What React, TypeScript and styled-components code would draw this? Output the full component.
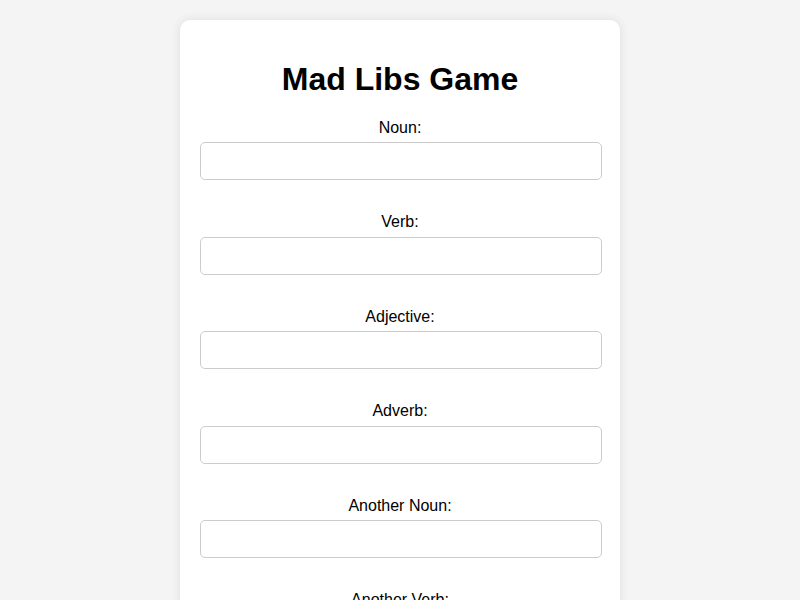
import React from "react";
import styled, { createGlobalStyle } from "styled-components";

const Global = createGlobalStyle`
  html, body { margin: 0; padding: 0; background: #f4f4f4; }
  body { font-family: "Liberation Sans", Arial, sans-serif; color: #000; }
  * { box-sizing: border-box; }
`;

const Page = styled.div`
  padding: 20px 0;
  display: flex;
  justify-content: center;
`;

const Card = styled.div`
  width: 440px;
  background: #fff;
  padding: 20px;
  border-radius: 10px;
  box-shadow: 0 0 10px rgba(0, 0, 0, 0.1);
  text-align: center;
`;

const Title = styled.h1`
  font-size: 32px;
  font-weight: bold;
  margin: 21.4px 0 20.5px;
  line-height: 37px;
`;

const Field = styled.div`
  display: flex;
  flex-direction: column;
  align-items: stretch;
  margin-bottom: 33.1px;
`;

const Label = styled.label`
  display: block;
  font-size: 16px;
  line-height: 18.4px;
  margin-bottom: 5px;
`;

const Input = styled.input`
  width: calc(100% + 2px);
  height: 38px;
  padding: 8px;
  font-size: 16px;
  font-family: inherit;
  border: 1px solid #ccc;
  border-radius: 5px;
  background: #fff;
  outline: none;
`;

const Button = styled.button`
  padding: 10px 20px;
  font-size: 16px;
  font-family: inherit;
  background: #28a745;
  color: #fff;
  border: none;
  border-radius: 5px;
`;

const fields = [
  "Noun",
  "Verb",
  "Adjective",
  "Adverb",
  "Another Noun",
  "Another Verb",
  "Another Adjective",
];

export default function App() {
  return (
    <>
      <Global />
      <Page>
        <Card>
          <Title>Mad Libs Game</Title>
          {fields.map((f) => (
            <Field key={f}>
              <Label>{f}:</Label>
              <Input type="text" />
            </Field>
          ))}
          <Button>Generate Story</Button>
        </Card>
      </Page>
    </>
  );
}
